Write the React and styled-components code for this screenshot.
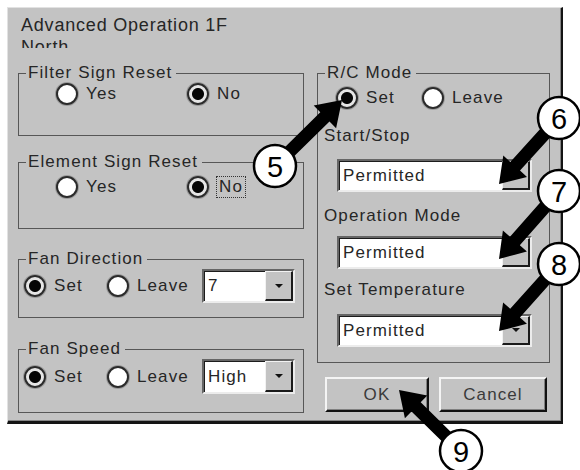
import React from 'react';
import styled, { createGlobalStyle } from 'styled-components';

const GlobalStyle = createGlobalStyle`
  html, body {
    margin: 0;
    padding: 0;
    background: #fff;
  }
  body {
    font-family: "Liberation Sans", Arial, sans-serif;
  }
`;

const Page = styled.div`
  position: relative;
  width: 580px;
  height: 470px;
  padding: 7px 0 0 7px;
  box-sizing: border-box;
  overflow: hidden;
`;

const Dialog = styled.div`
  width: 556px;
  height: 417px;
  box-sizing: border-box;
  background: #c3c3c3;
  border-top: 1px solid #e2e2e2;
  border-left: 1px solid #e2e2e2;
  border-right: 2px solid #141414;
  border-bottom: 3px solid #141414;
  box-shadow: inset -1px -1px 0 #858585;
  padding: 6px 0 0 10px;
  color: #262626;
  font-size: 17px;
  letter-spacing: 1.1px;
`;

const Title = styled.div`
  height: 34px;
  overflow: hidden;
  padding-left: 3px;
  font-size: 18px;
  line-height: 22px;
  letter-spacing: 0.8px;
`;

const Main = styled.div`
  display: grid;
  grid-template-columns: 286px 233px;
  column-gap: 13px;
  margin-top: 15px;
`;

const Column = styled.div`
  display: flex;
  flex-direction: column;
`;

const Group = styled.fieldset`
  margin: ${(p) => p.$mt || 0}px 0 0;
  padding: 0;
  min-width: 0;
  height: ${(p) => p.$h}px;
  box-sizing: border-box;
  border: 1px solid #575757;
  display: flex;
  flex-direction: column;
`;

const Legend = styled.legend`
  margin-left: 7px;
  padding: 0 4px 0 2px;
  line-height: 20px;
`;

const Row = styled.div`
  flex: 1;
  display: flex;
  align-items: center;
  padding: ${(p) => p.$pt || 0}px 0 ${(p) => p.$pb || 0}px ${(p) => p.$pl || 0}px;
`;

const ModeRow = styled(Row)`
  flex: none;
  height: 22px;
  margin-top: 4px;
`;

const Choice = styled.label`
  display: flex;
  align-items: center;
  gap: 8px;
  flex: none;
  width: ${(p) => (p.$w ? `${p.$w}px` : 'auto')};
`;

const RadioDot = styled.span`
  flex: none;
  width: 22px;
  height: 22px;
  box-sizing: border-box;
  border-radius: 50%;
  border: 2px solid #2b2b2b;
  box-shadow: 0 0 0 1px #9a9a9a;
  background: ${(p) => (p.$on
    ? 'radial-gradient(circle, #050505 0 5.5px, #e6e6e6 6.5px)'
    : '#fff')};
`;

const ChoiceText = styled.span`
  line-height: 20px;
  padding: 0 ${(p) => (p.$focus ? 2 : 0)}px;
  outline: ${(p) => (p.$focus ? '1px dotted #333' : 'none')};
`;

const FieldLabel = styled.div`
  margin-top: ${(p) => p.$mt}px;
  padding-left: 6px;
  line-height: 20px;
`;

const Combo = styled.div`
  display: flex;
  flex: none;
  width: ${(p) => p.$w}px;
  height: ${(p) => p.$h}px;
  margin: ${(p) => p.$mt || 0}px 0 0 ${(p) => p.$ml || 0}px;
  box-sizing: border-box;
  background: #fff;
  border-style: solid;
  border-width: 2px;
  border-color: #666 #ececec #ececec #666;
  box-shadow: inset 1px 1px 0 #1c1c1c;
`;

const ComboText = styled.span`
  flex: 1;
  display: flex;
  align-items: center;
  padding-left: 4px;
  white-space: nowrap;
  overflow: hidden;
`;

const DropButton = styled.span`
  flex: none;
  width: 28px;
  box-sizing: border-box;
  background: #c3c3c3;
  border-style: solid;
  border-width: 1px 2px 2px 1px;
  border-color: #f2f2f2 #1a1a1a #1a1a1a #f2f2f2;
  display: flex;
  align-items: center;
  justify-content: center;

  &::after {
    content: '';
    border-left: 4px solid transparent;
    border-right: 4px solid transparent;
    border-top: 4px solid #111;
  }
`;

const Buttons = styled.div`
  display: flex;
  gap: 10px;
  margin-top: 14px;
  padding-left: 8px;
`;

const Button = styled.button`
  width: ${(p) => p.$w}px;
  height: 35px;
  box-sizing: border-box;
  background: #c3c3c3;
  border-style: solid;
  border-width: 2px;
  border-color: #f4f4f4 #111 #111 #f4f4f4;
  box-shadow: inset -1px -1px 0 #808080;
  font-family: inherit;
  font-size: 17px;
  letter-spacing: 1.1px;
  color: #3a3a3a;
  padding: 0;
`;

const Overlay = styled.svg`
  position: absolute;
  left: 0;
  top: 0;
  pointer-events: none;
`;

const callouts = [
  { n: 5, cx: 275, cy: 166, tx: 342, ty: 100 },
  { n: 6, cx: 559, cy: 118, tx: 499, ty: 184 },
  { n: 7, cx: 559, cy: 191, tx: 499, ty: 259 },
  { n: 8, cx: 559, cy: 264, tx: 499, ty: 331 },
  { n: 9, cx: 461, cy: 451, tx: 399, ty: 390 },
];

// thick arrow polygon: shaft from (x1,y1), head tip at (x2,y2)
const arrowPoints = (x1, y1, x2, y2, shaft = 13, head = 32, headLen = 24) => {
  const len = Math.hypot(x2 - x1, y2 - y1);
  const ux = (x2 - x1) / len;
  const uy = (y2 - y1) / len;
  const px = -uy;
  const py = ux;
  const bx = x2 - ux * headLen;
  const by = y2 - uy * headLen;
  const s = shaft / 2;
  const h = head / 2;
  return [
    [x1 + px * s, y1 + py * s],
    [bx + px * s, by + py * s],
    [bx + px * h, by + py * h],
    [x2, y2],
    [bx - px * h, by - py * h],
    [bx - px * s, by - py * s],
    [x1 - px * s, y1 - py * s],
  ].map((pt) => pt.map((v) => v.toFixed(1)).join(',')).join(' ');
};

const Radio = ({ on, w, focus, children }) => (
  <Choice $w={w}>
    <RadioDot $on={on} />
    <ChoiceText $focus={focus}>{children}</ChoiceText>
  </Choice>
);

const Select = ({ value, w, h, mt, ml }) => (
  <Combo $w={w} $h={h} $mt={mt} $ml={ml}>
    <ComboText>{value}</ComboText>
    <DropButton />
  </Combo>
);

const App = () => (
  <Page>
    <GlobalStyle />
    <Dialog>
      <Title>
        Advanced Operation 1F
        <br />
        North
      </Title>
      <Main>
        <Column>
          <Group $h={73}>
            <Legend>Filter Sign Reset</Legend>
            <Row $pl={37} $pb={4}>
              <Radio w={131}>Yes</Radio>
              <Radio on>No</Radio>
            </Row>
          </Group>
          <Group $h={77} $mt={16}>
            <Legend>Element Sign Reset</Legend>
            <Row $pl={37} $pt={4}>
              <Radio w={131}>Yes</Radio>
              <Radio on focus>No</Radio>
            </Row>
          </Group>
          <Group $h={69} $mt={20}>
            <Legend>Fan Direction</Legend>
            <Row $pl={5} $pb={3}>
              <Radio on w={83}>Set</Radio>
              <Radio w={95}>Leave</Radio>
              <Select value="7" w={93} h={34} />
            </Row>
          </Group>
          <Group $h={74} $mt={21}>
            <Legend>Fan Speed</Legend>
            <Row $pl={5} $pb={2}>
              <Radio on w={83}>Set</Radio>
              <Radio w={95}>Leave</Radio>
              <Select value="High" w={93} h={35} />
            </Row>
          </Group>
        </Column>
        <Column>
          <Group $h={300}>
            <Legend>R/C Mode</Legend>
            <ModeRow $pl={18}>
              <Radio on w={86}>Set</Radio>
              <Radio>Leave</Radio>
            </ModeRow>
            <FieldLabel $mt={17}>Start/Stop</FieldLabel>
            <Select value="Permitted" w={195} h={33} mt={13} ml={19} />
            <FieldLabel $mt={14}>Operation Mode</FieldLabel>
            <Select value="Permitted" w={195} h={33} mt={10} ml={19} />
            <FieldLabel $mt={11}>Set Temperature</FieldLabel>
            <Select value="Permitted" w={195} h={33} mt={14} ml={19} />
          </Group>
          <Buttons>
            <Button $w={104}>OK</Button>
            <Button $w={108}>Cancel</Button>
          </Buttons>
        </Column>
      </Main>
    </Dialog>
    <Overlay width="580" height="470" viewBox="0 0 580 470">
      {callouts.map((c) => (
        <polygon key={`a${c.n}`} points={arrowPoints(c.cx, c.cy, c.tx, c.ty)} fill="#000" />
      ))}
      {callouts.map((c) => (
        <g key={`c${c.n}`}>
          <circle cx={c.cx} cy={c.cy} r="21" fill="#fff" stroke="#000" strokeWidth="2.5" />
          <text
            x={c.cx}
            y={c.cy + 10.5}
            textAnchor="middle"
            fontFamily="Liberation Sans, Arial, sans-serif"
            fontSize="29"
            fill="#000"
          >
            {c.n}
          </text>
        </g>
      ))}
    </Overlay>
  </Page>
);

export default App;
